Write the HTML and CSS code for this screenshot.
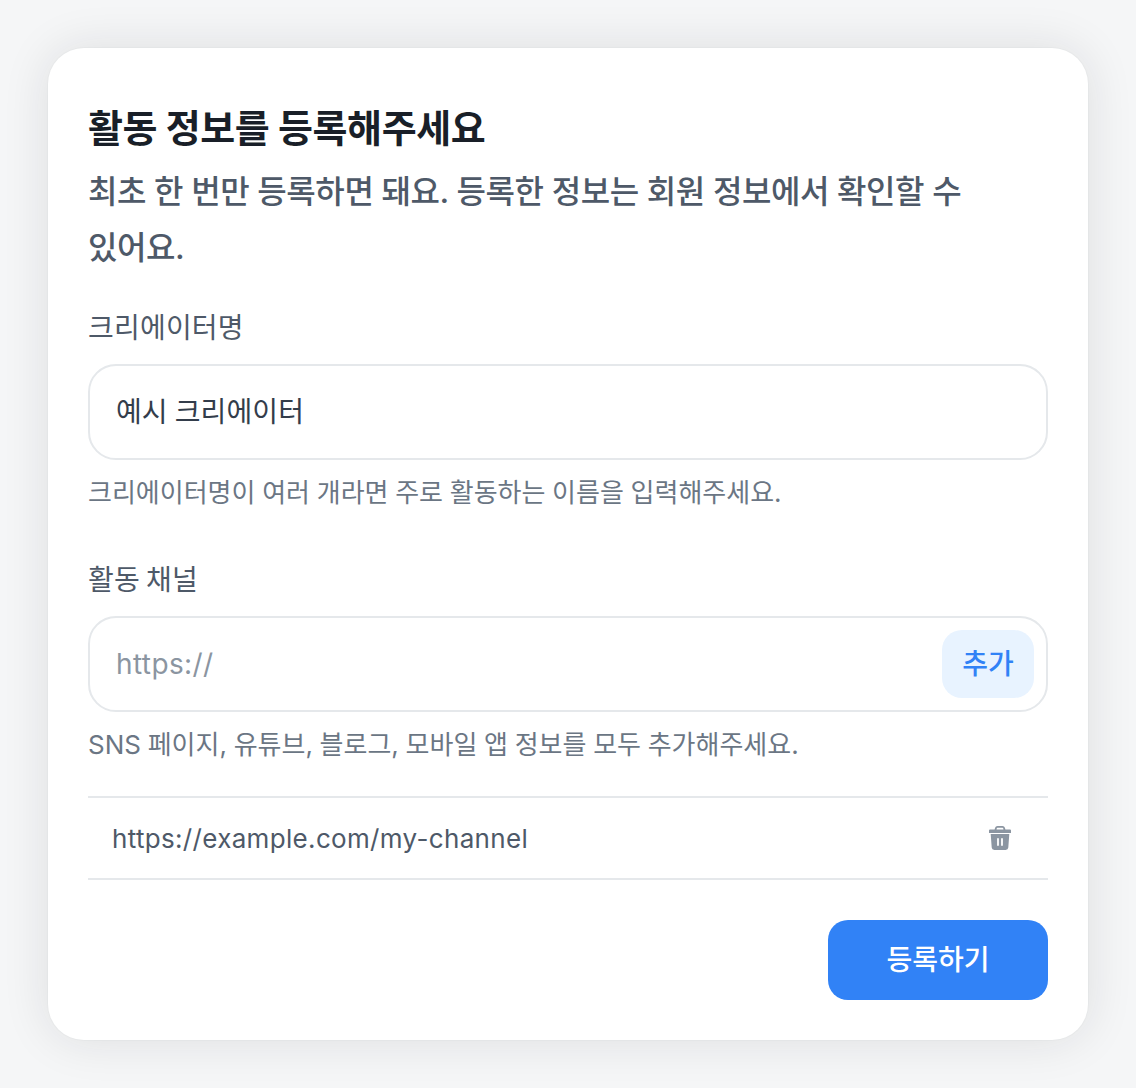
FILE: index.html
```html
<!DOCTYPE html>
<html lang="ko">
<head>
<meta charset="utf-8">
<title>활동 정보 등록</title>
<link rel="stylesheet" href="styles.css">
</head>
<body>
<main class="card">
  <h1 class="title">활동 정보를 등록해주세요</h1>
  <p class="subtitle">최초 한 번만 등록하면 돼요. 등록한 정보는 회원 정보에서 확인할 수 있어요.</p>
  <section class="field field-name">
    <label class="label">크리에이터명</label>
    <div class="input-box"><span class="value">예시 크리에이터</span></div>
    <p class="hint">크리에이터명이 여러 개라면 주로 활동하는 이름을 입력해주세요.</p>
  </section>
  <section class="field field-channel">
    <label class="label">활동 채널</label>
    <div class="input-box input-with-button">
      <span class="placeholder">https://</span>
      <button class="add-btn" type="button">추가</button>
    </div>
    <p class="hint">SNS 페이지, 유튜브, 블로그, 모바일 앱 정보를 모두 추가해주세요.</p>
  </section>
  <div class="channel-row">
    <span class="channel-url">https://example.com/my-channel</span>
    <svg class="trash" viewBox="0 0 24 24" width="24" height="24" aria-hidden="true">
      <path fill="#8b95a1" fill-rule="evenodd" d="M9.500 0h5a2.500 2.500 0 0 1 2.400 1.800l.5 1.700H22a1 1 0 0 1 1 1V7H1V4.500a1 1 0 0 1 1-1h4.600l.5-1.700A2.500 2.500 0 0 1 9.500 0Zm0 1.800a.7.7 0 0 0-.7.5l-.3 1.200h7l-.3-1.200a.7.7 0 0 0-.7-.5ZM2.700 8h18.600l-1 13.500A2.700 2.700 0 0 1 17.600 24H6.400a2.700 2.700 0 0 1-2.700-2.500ZM10 12a.9.9 0 0 0-.9.9v6.200a.9.9 0 0 0 1.800 0v-6.200A.9.9 0 0 0 10 12Zm4 0a.9.9 0 0 0-.9.9v6.200a.9.9 0 0 0 1.800 0v-6.200A.9.9 0 0 0 14 12Z"/>
    </svg>
  </div>
  <div class="actions"><button class="submit" type="button">등록하기</button></div>
</main>
</body>
</html>
```
FILE: styles.css
```css
* { box-sizing: border-box; }
html, body { margin: 0; }
body {
  background: #f5f6f7;
  padding: 48px;
  font-family: Inter, "Noto Sans CJK KR", "Noto Sans", sans-serif;
  color: #191f28;
}
.card {
  width: 1040px;
  height: 992px;
  background: #fff;
  border-radius: 36px;
  padding: 54px 40px 40px;
  box-shadow: 0 0 48px rgba(25, 31, 40, .11), 0 0 0 1px rgba(25, 31, 40, .02);
}
.title {
  margin: 0;
  font-size: 38px;
  line-height: 52px;
  font-weight: 700;
  letter-spacing: -.4px;
  color: #191f28;
}
.subtitle {
  margin: 10px 0 0;
  width: 900px;
  font-size: 32px;
  line-height: 56px;
  font-weight: 500;
  letter-spacing: -.43px;
  word-break: keep-all;
  color: #4e5968;
}
.field-name { margin-top: 32px; }
.field-channel { margin-top: 47px; }
.label {
  display: block;
  font-size: 28px;
  line-height: 40px;
  color: #4e5968;
  letter-spacing: .2px;
  word-spacing: -2px;
}
.input-box {
  margin-top: 16px;
  height: 96px;
  border: 2px solid #e5e8eb;
  border-radius: 28px;
  padding: 0 12px 0 26px;
  display: flex;
  align-items: center;
  justify-content: space-between;
  font-size: 28px;
}
.value { color: #333d4b; padding-bottom: 4px; letter-spacing: .1px; word-spacing: -1px; }
.placeholder { color: #8b95a1; letter-spacing: .4px; }
.add-btn {
  width: 92px;
  height: 68px;
  border: 0;
  border-radius: 20px;
  background: #e8f3ff;
  color: #3182f6;
  padding: 0 0 4px;
  font: 500 28px Inter, "Noto Sans CJK KR", sans-serif;
}
.hint {
  margin: 13px 0 0;
  font-size: 26px;
  line-height: 40px;
  color: #6b7684;
  word-spacing: -.6px;
}
.channel-row {
  margin-top: 31px;
  height: 84px;
  border-top: 2px solid #e5e8eb;
  border-bottom: 2px solid #e5e8eb;
  padding: 0 36px 0 24px;
  display: flex;
  align-items: center;
  justify-content: space-between;
}
.channel-url { font-size: 26px; color: #4e5968; letter-spacing: .33px; }
.actions { margin-top: 40px; display: flex; justify-content: flex-end; }
.submit {
  width: 220px;
  height: 80px;
  border: 0;
  border-radius: 20px;
  background: #3182f6;
  color: #fff;
  padding: 0 0 4px;
  font: 500 28px Inter, "Noto Sans CJK KR", sans-serif;
}
```
